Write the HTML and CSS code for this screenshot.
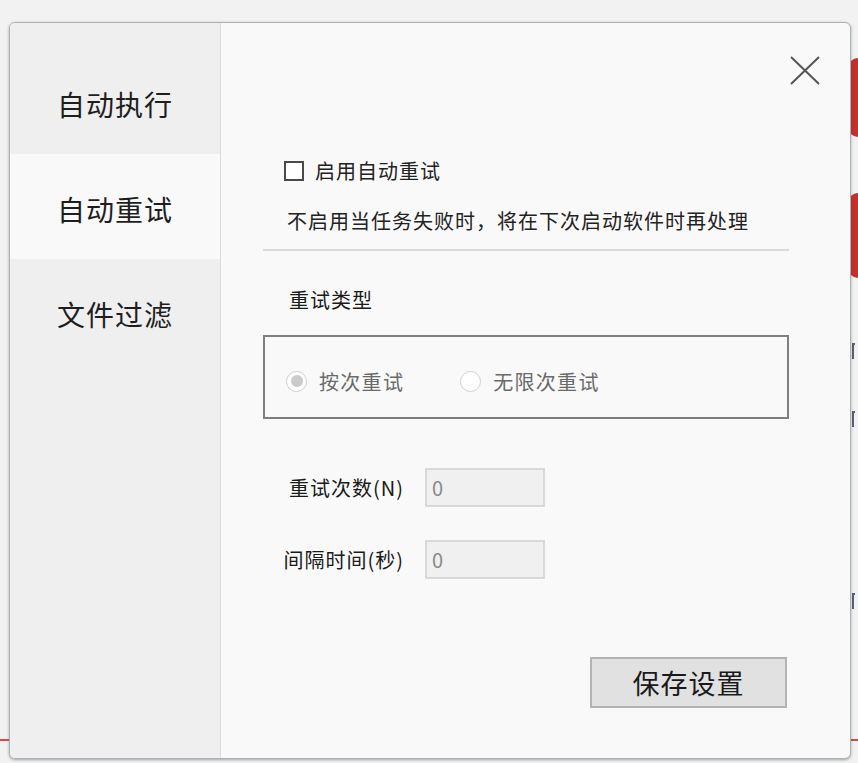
FILE: index.html
```html
<!DOCTYPE html>
<html lang="zh-CN">
<head>
    <meta charset="UTF-8">
    <title>设置</title>
    <link rel="stylesheet" href="styles.css">
</head>
<body>
<!-- 对话框后面的页面，只露出右边一点 -->
<div class="backdrop">
    <span class="blob blob-top"></span>
    <span class="blob blob-mid"></span>
    <span class="peek peek-1"></span>
    <span class="peek peek-2"></span>
    <span class="peek peek-3"></span>
    <span class="red-line"></span>
</div>

<div class="dialog">
    <div class="sidebar">
        <div class="tab">自动执行</div>
        <div class="tab on">自动重试</div>
        <div class="tab">文件过滤</div>
    </div>

    <div class="content">
        <div class="close-row">
            <svg class="close" width="30" height="29" viewBox="0 0 30 29">
                <path d="M1 1 L29 28 M29 1 L1 28" stroke="#555" stroke-width="2" fill="none"/>
            </svg>
        </div>

        <label class="check-row">
            <span class="checkbox"></span>
            <span>启用自动重试</span>
        </label>
        <p class="desc">不启用当任务失败时，将在下次启动软件时再处理</p>
        <div class="divider"></div>

        <div class="group-title">重试类型</div>
        <div class="group-box">
            <span class="option">
                <span class="radio checked"></span>
                <span>按次重试</span>
            </span>
            <span class="option">
                <span class="radio"></span>
                <span>无限次重试</span>
            </span>
        </div>

        <div class="field first">
            <span class="field-label">重试次数(N)</span>
            <span class="input">0</span>
        </div>
        <div class="field">
            <span class="field-label">间隔时间(秒)</span>
            <span class="input">0</span>
        </div>

        <div class="actions">
            <button class="save">保存设置</button>
        </div>
    </div>
</div>
</body>
</html>
```

FILE: styles.css
```css
*{
    padding: 0;
    margin: 0;
    box-sizing: border-box;
}
html, body{
    width: 858px;
    height: 763px;
    overflow: hidden;
}
body{
    background: #f2f2f2;
    font-family: "Noto Sans CJK SC", "Liberation Sans", sans-serif;
    color: #222;
    position: relative;
}

/* 背景页面 */
.backdrop{
    position: absolute;
    left: 0;
    top: 0;
    width: 858px;
    height: 763px;
}
.blob{
    position: absolute;
    left: 848px;
    width: 40px;
    background: #c4302b;
    border-radius: 10px;
}
.blob-top{
    top: 58px;
    height: 79px;
}
.blob-mid{
    top: 193px;
    height: 85px;
}
/* 被遮住的文字，只露出一条边 */
.peek{
    position: absolute;
    left: 852px;
    width: 3px;
    height: 16px;
    border-left: 2px solid #2c3e50;
    border-top: 2px solid #2c3e50;
    opacity: .8;
}
.peek-1{ top: 343px; }
.peek-2{ top: 411px; }
.peek-3{ top: 593px; }
.red-line{
    position: absolute;
    left: 0;
    top: 739px;
    width: 858px;
    height: 2px;
    background: #dc4a3c;
}

/* 对话框 */
.dialog{
    position: relative;
    z-index: 1;
    margin: 22px 0 0 9px;
    width: 842px;
    height: 737px;
    display: flex;
    border: 1px solid #a9b3b7;
    border-radius: 6px;
    background: #f9f9f9;
    box-shadow: 0 1px 3px rgba(60, 70, 75, .45);
    overflow: hidden;
}
.sidebar{
    width: 211px;
    flex-shrink: 0;
    background: #efefef;
    border-right: 1px solid #dcdcdc;
    padding-top: 26px;
}
.tab{
    height: 105px;
    display: flex;
    align-items: center;
    justify-content: center;
    padding-top: 5px;
    font-size: 28px;
    line-height: 34px;
    letter-spacing: 1px;
    color: #1e1e1e;
}
.tab.on{
    background: #f9f9f9;
}

.content{
    flex: 1;
    padding: 0 61px 0 42px;
}
.close-row{
    display: flex;
    justify-content: flex-end;
    margin: 33px -31px 0 0;
    height: 29px;
}

.check-row{
    display: flex;
    align-items: center;
    gap: 11px;
    margin-top: 75px;
    padding-left: 21px;
    height: 22px;
    font-size: 20px;
    line-height: 22px;
    letter-spacing: 1px;
}
.checkbox{
    width: 20px;
    height: 20px;
    border: 2px solid #4a4a4a;
    background: #fff;
}
.desc{
    margin-top: 24px;
    padding-left: 24px;
    font-size: 20px;
    line-height: 30px;
    letter-spacing: 1px;
}
.divider{
    margin-top: 13px;
    height: 2px;
    background: #dadada;
}
.group-title{
    margin-top: 35px;
    padding-left: 26px;
    font-size: 20px;
    line-height: 28px;
    letter-spacing: 1px;
    color: #1a1a1a;
}
.group-box{
    margin-top: 21px;
    height: 84px;
    border: 2px solid #7f7f7f;
    display: flex;
    align-items: center;
    padding: 8px 0 0 21px;
    font-size: 20px;
    color: #6a6a6a;
    letter-spacing: 1.3px;
}
.option{
    display: flex;
    align-items: center;
    gap: 12px;
}
.option + .option{
    margin-left: 56px;
}
.radio{
    width: 21px;
    height: 21px;
    border: 1px solid #cfcfcf;
    border-radius: 50%;
    background: #fff;
    display: flex;
    align-items: center;
    justify-content: center;
}
.radio.checked::after{
    content: "";
    width: 12px;
    height: 12px;
    border-radius: 50%;
    background: #cbcbcb;
}

.field{
    display: flex;
    align-items: center;
    margin-top: 33px;
    font-size: 20px;
    letter-spacing: 1px;
}
.field.first{
    margin-top: 49px;
}
.field-label{
    width: 141px;
    text-align: right;
    margin-right: 21px;
    color: #1a1a1a;
}
.input{
    width: 120px;
    height: 39px;
    border: 2px solid #d9d9d9;
    background: #f0f0f0;
    padding-left: 5px;
    font-size: 20px;
    line-height: 35px;
    color: #8a8a8a;
}

.actions{
    display: flex;
    justify-content: flex-end;
    margin: 78px 2px 0 0;
}
.save{
    width: 197px;
    height: 51px;
    border: 2px solid #b3b3b3;
    background: #e1e1e1;
    font-family: "Noto Sans CJK SC", sans-serif;
    font-size: 27px;
    color: #1a1a1a;
    letter-spacing: 1px;
}
```
